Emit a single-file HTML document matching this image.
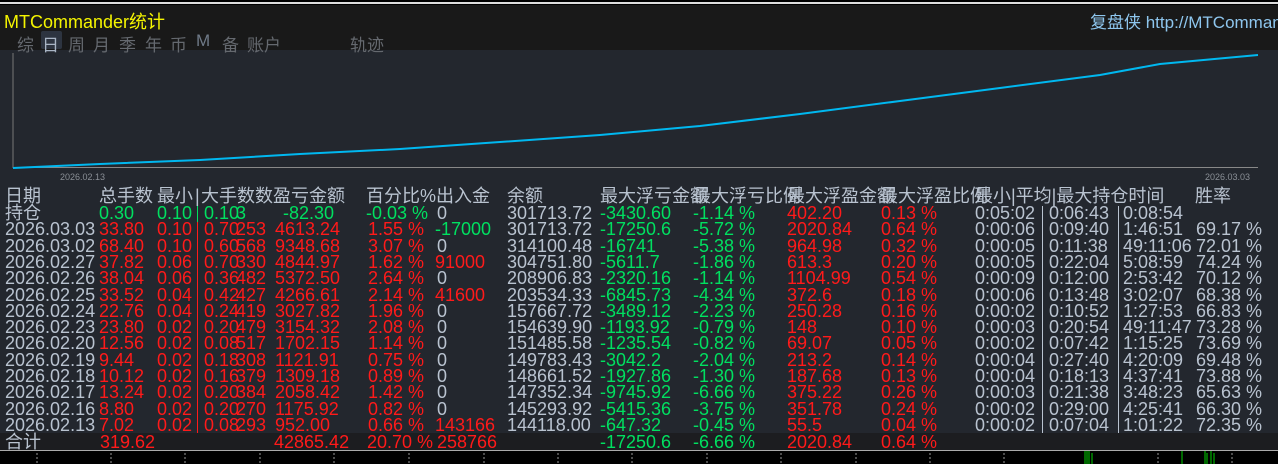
<!DOCTYPE html>
<html><head><meta charset="utf-8"><style>
*{margin:0;padding:0;box-sizing:border-box}
body{width:1278px;height:464px;overflow:hidden;background:#23272e;position:relative;font-family:"Liberation Sans","Noto Sans CJK SC",sans-serif;color:#b9c3d0}
.a{position:absolute;white-space:nowrap}
.r{color:#ff1a1a}.g{color:#00e060}.w{color:#b9c3d0}
.row{position:absolute;left:0;width:1278px;height:17px;font-size:18px;line-height:17px}
.row span{position:absolute;top:0;white-space:nowrap}
</style></head><body>
<div class="a" style="left:0;top:0;width:1278px;height:5px;background:#000"></div>
<div class="a" style="left:0;top:2px;width:1278px;height:2px;background:#ddd"></div>
<div class="a" style="left:0;top:5px;width:1278px;height:45px;background:#191919"></div>
<div class="a" style="left:4px;top:8px;font-size:18px;color:#f5f500">MTCommander统计</div>
<div class="a" style="left:1090px;top:8px;font-size:17px;color:#8ec6ee">复盘侠 http://MTCommander</div>
<div class="a" style="left:41px;top:31px;width:21px;height:18px;background:#2d3440;border-radius:2px"></div>
<div class="a" style="top:31px;left:0;font-size:17px;color:#65696f">
<span class="a" style="left:17px">综</span><span class="a" style="left:42px;color:#a8b4c4">日</span><span class="a" style="left:68px">周</span><span class="a" style="left:93px">月</span><span class="a" style="left:119px">季</span><span class="a" style="left:145px">年</span><span class="a" style="left:170px">币</span><span class="a" style="left:196px;color:#6f7a88">M</span><span class="a" style="left:222px">备</span><span class="a" style="left:247px">账户</span><span class="a" style="left:350px">轨迹</span></div>
<svg class="a" style="left:0;top:50px" width="1278" height="135">
<line x1="13" y1="3" x2="13" y2="118" stroke="#777" stroke-width="1"/>
<line x1="13" y1="117.5" x2="1258" y2="117.5" stroke="#888" stroke-width="1"/>
<polyline fill="none" stroke="#00b8f0" stroke-width="2" points="13,118 100,114 200,110 300,104 400,99 500,92 600,85 700,76 800,64 900,51 1000,38 1100,25 1160,14 1258,5"/>
<text x="60" y="130" font-size="9" fill="#8a8f96" font-family="Liberation Sans">2026.02.13</text>
<text x="1205" y="130" font-size="9" fill="#8a8f96" font-family="Liberation Sans">2026.03.03</text>
</svg>
<div class="row" style="top:188px;color:#b9c3d0"><span style="left:5px">日期</span><span style="left:99px">总手数</span><span style="left:157px">最小</span><span style="left:195px">|</span><span style="left:201px">大手数</span><span style="left:255px">数盈亏金额</span><span style="left:366px">百分比%</span><span style="left:436px">出入金</span><span style="left:507px">余额</span><span style="left:600px">最大浮亏金额</span><span style="left:693px">最大浮亏比例</span><span style="left:787px">最大浮盈金额</span><span style="left:880px">最大浮盈比例</span><span style="left:975px">最小|平均|最大持仓时间</span><span style="left:1195px">胜率</span></div>
<div class="a" style="left:197px;top:206px;width:1px;height:16px;background:#00e060"></div>
<div class="a" style="left:197px;top:222px;width:1px;height:211px;background:#ff1a1a"></div>
<div class="a" style="left:1042px;top:206px;width:1px;height:227px;background:#b9c3d0"></div>
<div class="a" style="left:1118px;top:206px;width:1px;height:227px;background:#b9c3d0"></div>
<div id="rows"></div>
<div class="row" style="top:205px"><span style="left:5px">持仓</span><span class="g" style="left:99px">0.30</span><span class="g" style="left:157px">0.10</span><span class="g" style="left:204px">0.10</span><span class="g" style="left:236px">3</span><span class="g" style="left:283px">-82.30</span><span class="g" style="left:366px">-0.03 %</span><span style="left:437px">0</span><span style="left:507px">301713.72</span><span class="g" style="left:600px">-3430.60</span><span class="g" style="left:693px">-1.14 %</span><span class="r" style="left:787px">402.20</span><span class="r" style="left:881px">0.13 %</span><span style="left:975px">0:05:02</span><span style="left:1049px">0:06:43</span><span style="left:1123px">0:08:54</span></div>
<script>
var d=[
["2026.03.03","33.80","0.10","0.70","253","4613.24","1.55 %","-17000","g","301713.72","-17250.6","-5.72 %","2020.84","0.64 %","0:00:06","0:09:40","1:46:51","69.17 %"],
["2026.03.02","68.40","0.10","0.60","568","9348.68","3.07 %","0","w","314100.48","-16741","-5.38 %","964.98","0.32 %","0:00:05","0:11:38","49:11:06","72.01 %"],
["2026.02.27","37.82","0.06","0.70","330","4844.97","1.62 %","91000","r","304751.80","-5611.7","-1.86 %","613.3","0.20 %","0:00:05","0:22:04","5:08:59","74.24 %"],
["2026.02.26","38.04","0.06","0.36","482","5372.50","2.64 %","0","w","208906.83","-2320.16","-1.14 %","1104.99","0.54 %","0:00:09","0:12:00","2:53:42","70.12 %"],
["2026.02.25","33.52","0.04","0.42","427","4266.61","2.14 %","41600","r","203534.33","-6845.73","-4.34 %","372.6","0.18 %","0:00:06","0:13:48","3:02:07","68.38 %"],
["2026.02.24","22.76","0.04","0.24","419","3027.82","1.96 %","0","w","157667.72","-3489.12","-2.23 %","250.28","0.16 %","0:00:02","0:10:52","1:27:53","66.83 %"],
["2026.02.23","23.80","0.02","0.20","479","3154.32","2.08 %","0","w","154639.90","-1193.92","-0.79 %","148","0.10 %","0:00:03","0:20:54","49:11:47","73.28 %"],
["2026.02.20","12.56","0.02","0.08","517","1702.15","1.14 %","0","w","151485.58","-1235.54","-0.82 %","69.07","0.05 %","0:00:02","0:07:42","1:15:25","73.69 %"],
["2026.02.19","9.44","0.02","0.18","308","1121.91","0.75 %","0","w","149783.43","-3042.2","-2.04 %","213.2","0.14 %","0:00:04","0:27:40","4:20:09","69.48 %"],
["2026.02.18","10.12","0.02","0.16","379","1309.18","0.89 %","0","w","148661.52","-1927.86","-1.30 %","187.68","0.13 %","0:00:04","0:18:13","4:37:41","73.88 %"],
["2026.02.17","13.24","0.02","0.20","384","2058.42","1.42 %","0","w","147352.34","-9745.92","-6.66 %","375.22","0.26 %","0:00:03","0:21:38","3:48:23","65.63 %"],
["2026.02.16","8.80","0.02","0.20","270","1175.92","0.82 %","0","w","145293.92","-5415.36","-3.75 %","351.78","0.24 %","0:00:02","0:29:00","4:25:41","66.30 %"],
["2026.02.13","7.02","0.02","0.08","293","952.00","0.66 %","143166","r","144118.00","-647.32","-0.45 %","55.5","0.04 %","0:00:02","0:07:04","1:01:22","72.35 %"]];
var h="";
d.forEach(function(r,i){var t=221.3+i*16.3;
h+='<div class="row" style="top:'+t+'px"><span style="left:5px">'+r[0]+'</span><span class="r" style="left:99px">'+r[1]+'</span><span class="r" style="left:157px">'+r[2]+'</span><span class="r" style="left:204px">'+r[3]+'</span><span class="r" style="left:236px">'+r[4]+'</span><span class="r" style="left:275px">'+r[5]+'</span><span class="r" style="left:368px">'+r[6]+'</span><span class="'+r[8]+'" style="left:'+(r[7]=="0"?437:435)+'px">'+r[7]+'</span><span style="left:507px">'+r[9]+'</span><span class="g" style="left:600px">'+r[10]+'</span><span class="g" style="left:693px">'+r[11]+'</span><span class="r" style="left:787px">'+r[12]+'</span><span class="r" style="left:881px">'+r[13]+'</span><span style="left:975px">'+r[14]+'</span><span style="left:1049px">'+r[15]+'</span><span style="left:1123px">'+r[16]+'</span><span style="left:1196px">'+r[17]+'</span></div>';});
document.getElementById("rows").innerHTML=h;
</script>
<div class="a" style="left:0;top:433px;width:1278px;height:17px;background:#1c1d20"></div>
<div class="row" style="top:434px"><span style="left:5px">合计</span><span class="r" style="left:100px">319.62</span><span class="r" style="left:274px">42865.42</span><span class="r" style="left:367px">20.70 %</span><span class="r" style="left:437px">258766</span><span class="g" style="left:600px">-17250.6</span><span class="g" style="left:693px">-6.66 %</span><span class="r" style="left:787px">2020.84</span><span class="r" style="left:881px">0.64 %</span></div>
<div class="a" style="left:0;top:450px;width:1278px;height:14px;background:#000"></div>
<div class="a" style="left:0;top:450px;width:1278px;height:1px;background:#aaa"></div>
<svg class="a" style="left:0;top:451px" width="1278" height="13">
<g stroke="#999" stroke-dasharray="2,2">
<line x1="37" y1="2" x2="37" y2="13"/><line x1="111" y1="2" x2="111" y2="13"/><line x1="185" y1="2" x2="185" y2="13"/><line x1="260" y1="2" x2="260" y2="13"/><line x1="334" y1="2" x2="334" y2="13"/><line x1="409" y1="2" x2="409" y2="13"/><line x1="484" y1="2" x2="484" y2="13"/><line x1="558" y1="2" x2="558" y2="13"/><line x1="632" y1="2" x2="632" y2="13"/><line x1="707" y1="2" x2="707" y2="13"/><line x1="781" y1="2" x2="781" y2="13"/><line x1="856" y1="2" x2="856" y2="13"/><line x1="930" y1="2" x2="930" y2="13"/><line x1="1004" y1="2" x2="1004" y2="13"/><line x1="1158" y1="2" x2="1158" y2="13"/><line x1="1232" y1="2" x2="1232" y2="13"/></g>
<g stroke="#00d000" stroke-width="1"><line x1="1085" y1="0" x2="1085" y2="13"/><line x1="1087" y1="0" x2="1087" y2="13"/><line x1="1089" y1="0" x2="1089" y2="13"/><line x1="1092" y1="2" x2="1092" y2="13"/><line x1="1182" y1="0" x2="1182" y2="13"/><line x1="1205" y1="0" x2="1205" y2="13"/><line x1="1207" y1="2" x2="1207" y2="13"/><line x1="1211" y1="0" x2="1211" y2="13"/><line x1="1214" y1="2" x2="1214" y2="13"/></g>
</svg>
</body></html>
